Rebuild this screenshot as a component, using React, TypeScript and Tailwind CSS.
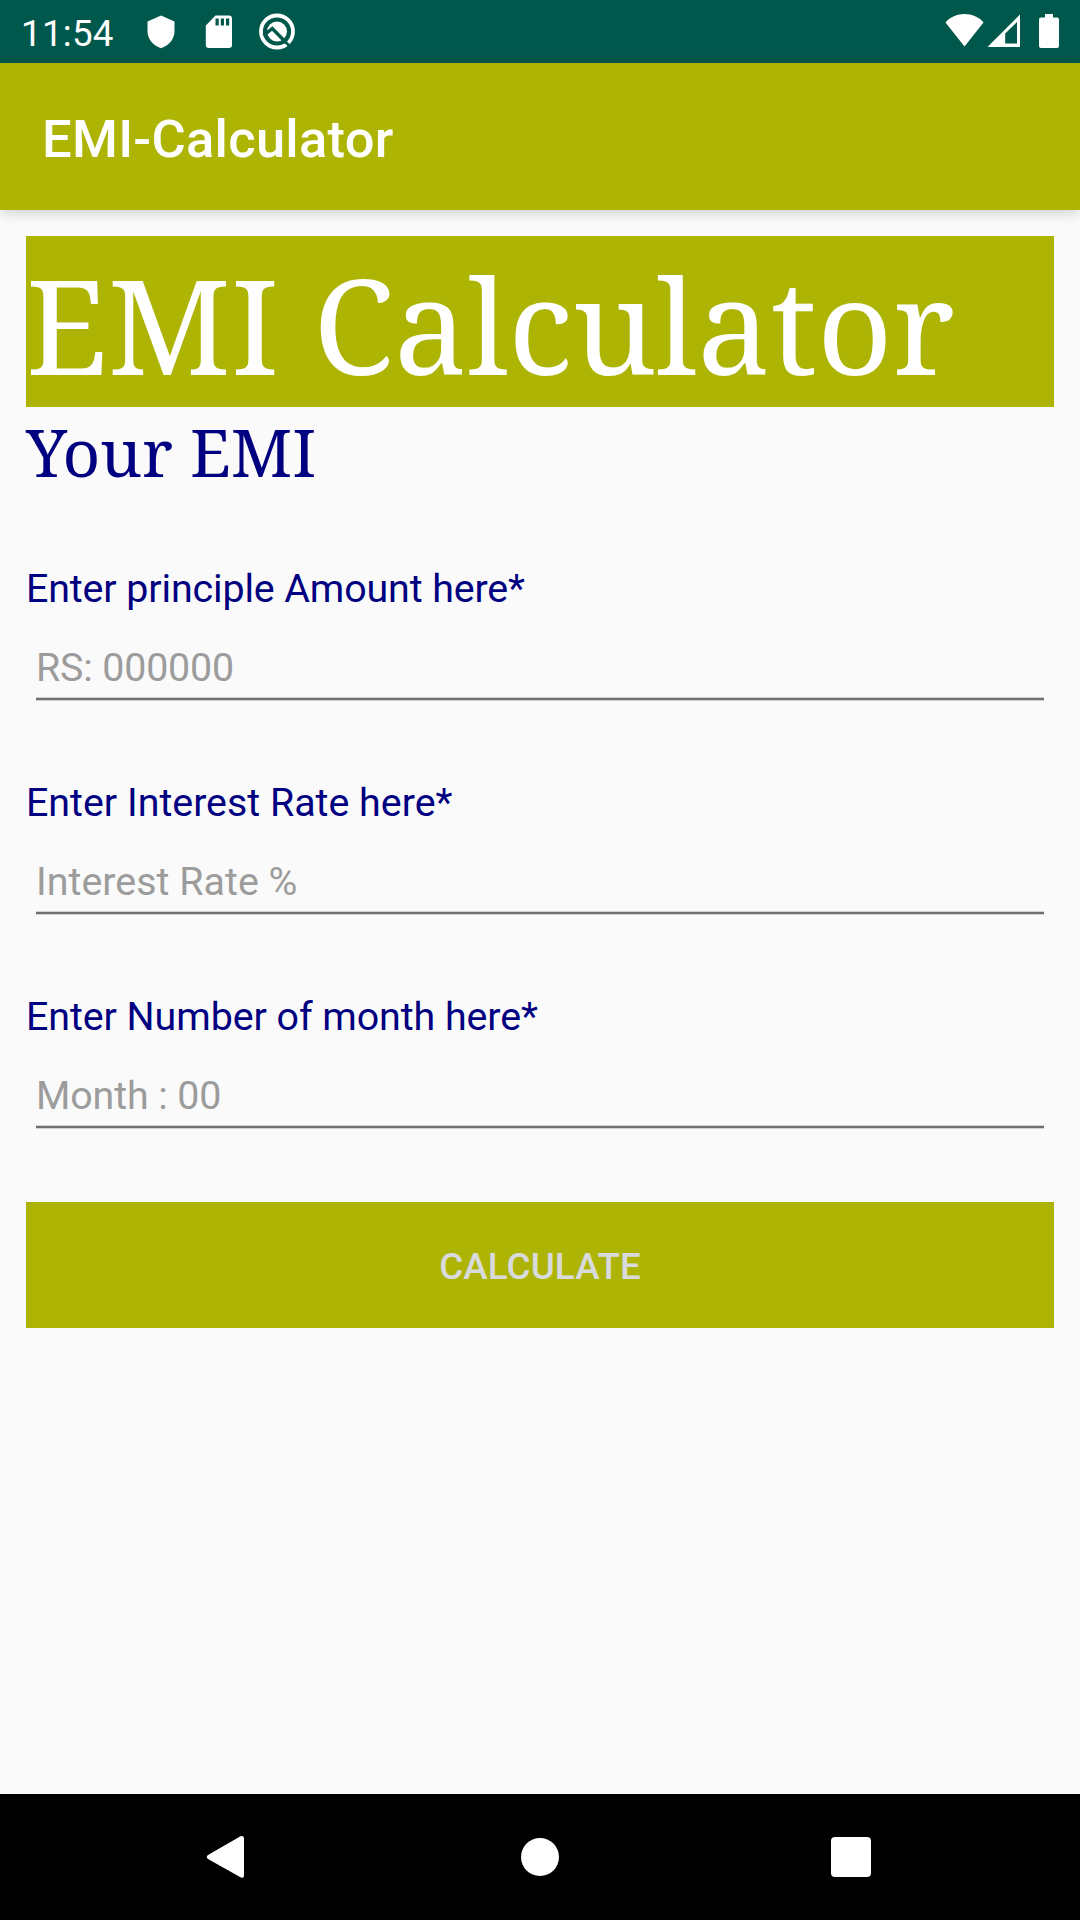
import React from "react";

const fields = [
  { label: "Enter principle Amount here*", hint: "RS: 000000", tracking: "tracking-[-0.12px]", hintTracking: "placeholder:tracking-[-0.17px]" },
  { label: "Enter Interest Rate here*", hint: "Interest Rate %", tracking: "tracking-normal", hintTracking: "placeholder:tracking-[0.03px]" },
  { label: "Enter Number of month here*", hint: "Month : 00", tracking: "tracking-[-0.06px]", hintTracking: "placeholder:tracking-[-0.12px]" },
];

function StatusBar() {
  return (
    <div className="flex h-[63px] items-start bg-[#00574b] text-white">
      <span className="ml-[21px] mt-[12px] w-[126px] text-[36.75px] leading-[43px] tracking-[0.25px]">11:54</span>
      <svg className="mt-[15px]" width="28" height="34" viewBox="0 0 28 34" fill="white">
        <path d="M14 .5 27.500 6.500V16c0 8-5.500 14.800-13.500 17.200C6 30.800.5 24 .5 16V6.500z" />
      </svg>
      <svg className="ml-[30px] mt-[15px]" width="28" height="34" viewBox="0 0 28 34" fill="white">
        <path
          fillRule="evenodd"
          d="M10.500.5H24q3 0 3 3V30q0 3-3 3H3.800q-3 0-3-3V10.500zM10.500 3.500v7h3.200v-7zM15.800 3.500v7H19v-7zM21 3.500v7h3.200v-7z"
        />
      </svg>
      <svg className="ml-[25px] mt-[12px]" width="38" height="38" viewBox="0 0 38 38" fill="none">
        <circle cx="19" cy="19.500" r="16" stroke="white" strokeWidth="3.800" />
        <circle cx="19" cy="19.500" r="10" fill="white" />
        <path d="M5.500 23.500 14.300 16.500 28 30.500" stroke="#00574b" strokeWidth="3.400" />
        <path d="M26 28.500 32.500 35" stroke="#00574b" strokeWidth="2.800" />
      </svg>
      <div className="mr-[21px] ml-auto flex">
        <svg className="mt-[13px]" width="40" height="35" viewBox="0 0 40 35" fill="white">
          <path d="M.5 9.500C5 4 12 1 19.500 1s14.500 3 19 8.500L19.500 33.500z" />
        </svg>
        <svg className="ml-[2px] mt-[14px]" width="34" height="34" viewBox="0 0 34 34" fill="white">
          <path fillRule="evenodd" d="M33 .5V33H.5zM30 8 18.200 19.500V29.500H30z" />
        </svg>
        <svg className="ml-[18px] mt-[13px]" width="20" height="36" viewBox="0 0 20 36" fill="white">
          <path d="M6 1h8v3.500h4q2 0 2 2V33q0 2-2 2H2q-2 0-2-2V6.500q0-2 2-2h4z" />
        </svg>
      </div>
    </div>
  );
}

type FieldProps = { label: string; hint: string; tracking: string; hintTracking: string };

function Field({ label, hint, tracking, hintTracking }: FieldProps) {
  return (
    <div className="h-[214px]">
      <label
        className={`block h-[46px] text-[39.375px] leading-[46px] whitespace-nowrap text-[#000080] ${tracking}`}
      >
        {label}
      </label>
      <div className="mx-[10px] mt-[33px]">
        <input
          className={`block h-[46px] w-full bg-transparent text-[39.375px] leading-[46px] outline-none placeholder:text-[#9c9c9c] placeholder:opacity-100 ${hintTracking}`}
          placeholder={hint}
        />
        <div className="mt-[6px] h-[4px] border-y border-[#d0d0d0] bg-[#707070]" />
      </div>
    </div>
  );
}

function NavBar() {
  return (
    <div className="flex h-[126px] items-center bg-black">
      <svg className="ml-[206px]" width="39" height="44" viewBox="0 0 39 44" fill="white">
        <path d="M34.500 1.300Q38 0 38 3.500V40.500Q38 44 34.500 42.300L2 24Q-.5 22 2 20z" />
      </svg>
      <div className="ml-[276px] size-[38px] rounded-full bg-white" />
      <div className="ml-[272px] size-[40px] rounded-[4px] bg-white" />
    </div>
  );
}

export default function App() {
  return (
    <div className="flex h-[1920px] w-[1080px] flex-col overflow-hidden bg-[#fafafa] font-[Roboto,sans-serif]">
      <StatusBar />
      <header className="h-[147px] bg-[#adb404] pt-[45px] pl-[42px] text-[52.5px] leading-[62px] font-medium tracking-[0.28px] text-white shadow-[0_3px_12px_rgba(0,0,0,0.17)]">
        EMI-Calculator
      </header>
      <main className="flex grow flex-col px-[26px] pt-[26px]">
        <h1 className="h-[171px] bg-[#adb404] font-['Noto_Serif',serif] text-[131.25px] leading-[176px] whitespace-nowrap text-white">
          EMI Calculator
        </h1>
        <h2 className="h-[159px] font-['Noto_Serif',serif] text-[65.625px] leading-[89px] whitespace-nowrap text-[#000080]">
          Your EMI
        </h2>
        <form>
          {fields.map((f) => (
            <Field key={f.label} {...f} />
          ))}
          <button
            type="button"
            className="-mt-[6px] block h-[126px] w-full bg-[#adb404] pt-[3px] text-[36.75px] font-medium tracking-[0.12px] text-[#d9dadc]"
          >
            CALCULATE
          </button>
        </form>
      </main>
      <NavBar />
    </div>
  );
}
